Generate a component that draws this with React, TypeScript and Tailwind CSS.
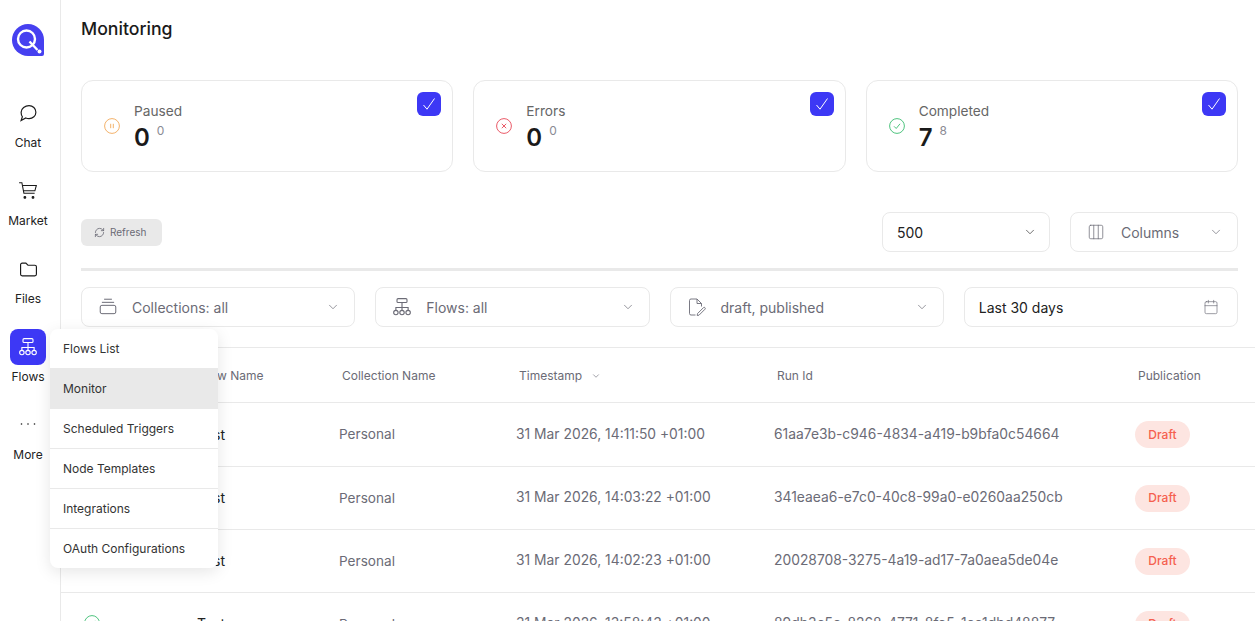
import { ChevronDown, Columns3, Calendar, RefreshCw } from 'lucide-react'

const font = { fontFamily: 'Inter, "Liberation Sans", sans-serif' }

const rows = [
  { time: '31 Mar 2026, 14:11:50 +01:00', id: '61aa7e3b-c946-4834-a419-b9bfa0c54664' },
  { time: '31 Mar 2026, 14:03:22 +01:00', id: '341eaea6-e7c0-40c8-99a0-e0260aa250cb' },
  { time: '31 Mar 2026, 14:02:23 +01:00', id: '20028708-3275-4a19-ad17-7a0aea5de04e' },
  { time: '31 Mar 2026, 13:58:43 +01:00', id: '89db3c5e-8268-4771-8fe5-1ce1dbd48877' },
]

const menuItems = ['Flows List', 'Monitor', 'Scheduled Triggers', 'Node Templates', 'Integrations', 'OAuth Configurations']

function FlowIcon({ className }: { className?: string }) {
  return (
    <svg viewBox="0 0 18 18" fill="none" stroke="currentColor" strokeWidth="1" className={className}>
      <rect x="4.5" y="1.5" width="9" height="3.5" rx="1" />
      <path d="M9 5v4M3.5 12V9.5h11V12M9 9v3" />
      <circle cx="3.5" cy="14" r="2" />
      <circle cx="9" cy="14" r="2" />
      <circle cx="14.5" cy="14" r="2" />
    </svg>
  )
}

function ChatIcon() {
  return (
    <svg viewBox="0 0 18 18" fill="none" stroke="currentColor" strokeWidth="1.1" className="w-[19px] h-[19px] text-[#1a1a1a]">
      <path d="M9.5 1.5c3.6 0 6.5 2.7 6.5 6.200s-2.900 6.200-6.500 6.200c-1.100 0-2.200-.3-3.100-.7L2 15.700l1.200-3.600C2.500 11 2 9.400 2 7.700 2 4.200 5.900 1.500 9.500 1.500z" />
    </svg>
  )
}

function CartIcon() {
  return (
    <svg viewBox="0 0 18 18" fill="none" stroke="currentColor" strokeWidth="0.95" className="w-5 h-5 text-[#1a1a1a]">
      <path d="M1 1.500h2.500l1.800 9.500h9.700" />
      <path d="M3.900 4h12.600l-1.300 4.800H4.800" />
      <circle cx="6.200" cy="14.800" r="0.800" fill="currentColor" />
      <circle cx="13.500" cy="14.800" r="0.800" fill="currentColor" />
    </svg>
  )
}

function FolderIcon() {
  return (
    <svg viewBox="0 0 18 18" fill="none" stroke="currentColor" strokeWidth="1.1" className="w-[19px] h-[19px] text-[#1a1a1a]">
      <path d="M1.500 4.500a1.500 1.500 0 0 1 1.500-1.500h3.500l2 2h6.500a1.500 1.500 0 0 1 1.500 1.500v7a1.500 1.500 0 0 1-1.500 1.500H3a1.500 1.500 0 0 1-1.500-1.500z" />
    </svg>
  )
}

function DotsIcon() {
  return (
    <svg viewBox="0 0 18 18" fill="currentColor" className="w-[18px] h-[18px] text-[#1a1a1a] -mt-[3px]">
      <circle cx="2.500" cy="9" r="0.800" />
      <circle cx="9" cy="9" r="0.800" />
      <circle cx="15.500" cy="9" r="0.800" />
    </svg>
  )
}

function CollectionIcon() {
  return (
    <svg viewBox="0 0 18 18" fill="none" stroke="currentColor" strokeWidth="0.9" className="w-5 h-5 text-[#6b6b76]">
      <path d="M5.500 2h7M3.500 4.800h11" />
      <rect x="2" y="7.500" width="14" height="7.500" rx="1.500" />
    </svg>
  )
}

function DraftIcon() {
  return (
    <svg viewBox="0 0 20 20" fill="none" stroke="currentColor" strokeWidth="0.9" className="w-5 h-5 text-[#6b6b76]">
      <path d="M8.500 18H4a1.500 1.500 0 0 1-1.500-1.500v-13A1.500 1.500 0 0 1 4 2h6l4.500 4.500v3" />
      <path d="M10 2v4.500h4.500" />
      <path d="M12 18.200l-1.800.3.300-1.900 6-6a1.100 1.100 0 0 1 1.500 1.600z" />
    </svg>
  )
}

function CheckMark() {
  return (
    <svg viewBox="0 0 14 14" fill="none" stroke="currentColor" strokeWidth="1" className="w-[14px] h-[14px] text-white">
      <path d="M1.500 8l3.500 4.200L12.500 1.500" />
    </svg>
  )
}

function Logo() {
  return (
    <svg viewBox="0 0 32 32" className="w-8 h-8">
      <path d="M16 0a16 16 0 0 1 16 16v14a2 2 0 0 1-2 2H16A16 16 0 0 1 16 0z" fill="#4640f0" />
      <circle cx="14.500" cy="15" r="8.500" fill="none" stroke="white" strokeWidth="2.400" />
      <path d="M17.500 17.500l8 8.500" stroke="white" strokeWidth="2.400" />
      <circle cx="27.500" cy="27.500" r="2" fill="white" />
    </svg>
  )
}

function NavItem({ label, icon, active }: { label: string; icon: React.ReactNode; active?: boolean }) {
  return (
    <div className="flex flex-col items-center gap-1">
      <div className={active ? 'w-9 h-9 rounded-lg flex items-center justify-center bg-[#3d38f5]' : 'w-9 h-9 rounded-lg flex items-center justify-center'}>
        {icon}
      </div>
      <span className="text-xs leading-4 text-[#222]">{label}</span>
    </div>
  )
}

function StatusIcon({ tone }: { tone: 'paused' | 'error' | 'done' }) {
  const cls = tone === 'paused' ? 'text-[#f3b26b]' : tone === 'error' ? 'text-[#ea5a68]' : 'text-[#4fc47f]'
  return (
    <svg viewBox="0 0 16 16" fill="none" stroke="currentColor" strokeWidth="1" className={`w-4 h-4 ${cls}`}>
      <circle cx="8" cy="8" r="7.400" />
      {tone === 'paused' && <path d="M6.700 5.800v4.400M9.300 5.800v4.400" />}
      {tone === 'error' && <path d="M5.800 5.800l4.400 4.400M10.200 5.800l-4.400 4.400" />}
      {tone === 'done' && <path d="M5 8.300l2.200 2.200L11 5.800" />}
    </svg>
  )
}

function StatCard({ label, value, sub, tone }: { label: string; value: string; sub: string; tone: 'paused' | 'error' | 'done' }) {
  return (
    <div className="relative h-[92px] rounded-xl border border-[#e9e9e9] bg-white flex items-center pl-[22px]">
      <StatusIcon tone={tone} />
      <div className="ml-[14px] self-start pt-5">
        <div className="text-[13.7px] leading-5 text-[#666]">{label}</div>
        <div className="mt-[3px] flex items-start">
          <span className="text-2xl leading-7 font-semibold text-[#1a1a1a]">{value}</span>
          <span className="ml-[7px] -mt-px text-xs leading-4 text-[#8a8a94]">{sub}</span>
        </div>
      </div>
      <div className="absolute top-[11px] right-[11px] w-6 h-6 rounded-md bg-[#3d38f5] flex items-center justify-center">
        <CheckMark />
      </div>
    </div>
  )
}

function SelectBox({ icon, label, dark }: { icon?: React.ReactNode; label: string; dark?: boolean }) {
  return (
    <div className={icon ? 'h-10 flex-1 min-w-0 rounded-lg border border-[#e9e9e9] bg-white flex items-center pl-4 pr-[14px]' : 'h-10 flex-1 min-w-0 rounded-lg border border-[#e9e9e9] bg-white flex items-center pl-[14px] pr-3'}>
      {icon && <span className="flex mr-[14px]">{icon}</span>}
      <span className={dark ? 'pt-px text-sm text-[#222]' : 'pt-px text-sm text-[#6b6b76]'}>{label}</span>
      <ChevronDown className={dark ? 'ml-auto w-[14px] h-[14px] text-[#333]' : 'ml-auto w-[14px] h-[14px] text-[#6b6b76]'} strokeWidth={1.2} />
    </div>
  )
}

export default function App() {
  return (
    <div className="relative flex h-[621px] overflow-hidden bg-white text-[#222]" style={font}>
      <aside className="w-[61px] shrink-0 border-r border-[#e9e9e9] flex flex-col items-center pt-6 pr-1">
        <Logo />
        <div className="mt-[39px] flex flex-col items-center gap-[22px]">
          <NavItem label="Chat" icon={<ChatIcon />} />
          <NavItem label="Market" icon={<CartIcon />} />
          <NavItem label="Files" icon={<FolderIcon />} />
          <NavItem label="Flows" active icon={<FlowIcon className="w-5 h-5 text-white" />} />
          <NavItem label="More" icon={<DotsIcon />} />
        </div>
      </aside>

      <main className="flex-1 min-w-0 flex flex-col">
        <div className="pl-5 pr-[17px]">
          <h1 className="pt-[17px] text-[17.7px] leading-6 font-medium text-[#1a1a1a]">Monitoring</h1>

          <div className="mt-[39px] grid grid-cols-3 gap-5">
            <StatCard label="Paused" value="0" sub="0" tone="paused" />
            <StatCard label="Errors" value="0" sub="0" tone="error" />
            <StatCard label="Completed" value="7" sub="8" tone="done" />
          </div>

          <div className="mt-10 flex items-center">
            <button className="h-[27px] w-[81px] rounded-md bg-[#e9e9e9] flex items-center gap-[5px] pl-[13px] text-[10px] text-[#6b6b76]">
              <RefreshCw className="w-[11px] h-[11px]" strokeWidth={1.8} />
              Refresh
            </button>
            <div className="ml-auto flex gap-5">
              <div className="w-[168px] flex">
                <SelectBox label="500" dark />
              </div>
              <div className="w-[168px] flex">
                <SelectBox label="Columns" icon={<Columns3 className="w-[18px] h-[18px] mr-0.5 text-[#6b6b76]" strokeWidth={1} />} />
              </div>
            </div>
          </div>

          <div className="mt-4 h-[3px] bg-[#e9e9e9]" />

          <div className="mt-4 grid grid-cols-4 gap-5">
            <SelectBox label="Collections: all" icon={<CollectionIcon />} />
            <SelectBox label="Flows: all" icon={<FlowIcon className="w-5 h-5 text-[#6b6b76]" />} />
            <SelectBox label="draft, published" icon={<DraftIcon />} />
            <div className="h-10 min-w-0 rounded-lg border border-[#e9e9e9] bg-white flex items-center px-[14px]">
              <span className="pt-px text-sm text-[#222]">Last 30 days</span>
              <Calendar className="ml-auto mr-1 w-4 h-4 text-[#6b6b76]" strokeWidth={1} />
            </div>
          </div>
        </div>

        <div className="mt-5 border-t border-[#e9e9e9]">
          <div className="h-[55px] pt-px grid grid-cols-[136px_142px_177px_258px_361px_1fr] items-center border-b border-[#e9e9e9] text-xs text-[#6b6b76]">
            <span />
            <span className="pl-[3px]">Flow Name</span>
            <span className="pl-[3px]">Collection Name</span>
            <span className="pl-[3px] flex items-center gap-[9px]">
              Timestamp
              <ChevronDown className="w-[10px] h-[10px]" strokeWidth={1.5} />
            </span>
            <span className="pl-[3px]">Run Id</span>
            <span className="pl-[3px]">Publication</span>
          </div>
          {rows.map((row, i) => (
            <div
              key={row.id}
              className={
                i === 0
                  ? 'h-16 grid grid-cols-[136px_142px_177px_258px_361px_1fr] items-center border-b border-[#e9e9e9] text-sm text-[#6b6b76]'
                  : 'h-[63px] grid grid-cols-[136px_142px_177px_258px_361px_1fr] items-center border-b border-[#e9e9e9] text-sm text-[#6b6b76]'
              }
            >
              <span className="pl-[23px] pb-[2px]">
                <StatusIcon tone="done" />
              </span>
              <span className="text-[#222]">Test</span>
              <span className="pt-px text-[13.6px]">Personal</span>
              <span className="text-[13.85px]">{row.time}</span>
              <span className="text-[13.85px]">{row.id}</span>
              <span>
                <span className="inline-flex items-center justify-center w-[55px] h-[27px] rounded-[14px] bg-[#fde5e1] text-xs font-medium text-[#f5604f]">
                  Draft
                </span>
              </span>
            </div>
          ))}
        </div>
      </main>

      <div className="absolute left-[50px] top-[329px] w-[168px] rounded-lg bg-white shadow-[0_4px_16px_rgba(0,0,0,0.1)] overflow-hidden">
        {menuItems.map((item, i) => (
          <div
            key={item}
            className={
              item === 'Monitor'
                ? 'h-10 flex items-center pl-[13px] text-xs text-[#333] bg-[#e9e9e9] border-t border-[#e9e9e9]'
                : i === 0
                  ? 'h-[39px] flex items-center pl-[13px] text-xs text-[#333]'
                  : 'h-10 flex items-center pl-[13px] text-xs text-[#333] border-t border-[#e9e9e9]'
            }
          >
            {item}
          </div>
        ))}
      </div>
    </div>
  )
}
